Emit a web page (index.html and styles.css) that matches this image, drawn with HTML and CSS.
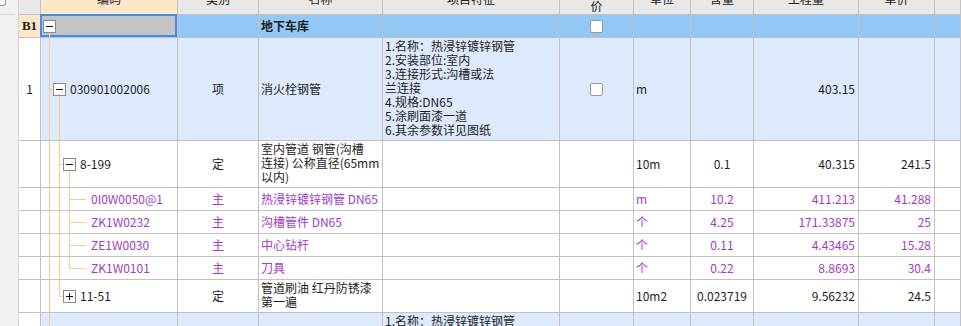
FILE: index.html
```html
<!DOCTYPE html>
<html lang="zh-CN">
<head>
  <meta charset="UTF-8">
  <title>分部分项</title>
  <link rel="stylesheet" href="styles.css">
</head>
<body>

  <div class="page">
    <div class="gutter">
      <div class="gutter-top"><span class="knob"></span></div>
    </div>

    <div class="sheet">
      <!-- header -->
      <div class="row head">
        <div class="c hd"></div>
        <div class="c hd hd-code"><span>编码</span></div>
        <div class="c hd"><span>类别</span></div>
        <div class="c hd"><span>名称</span></div>
        <div class="c hd"><span>项目特征</span></div>
        <div class="c hd"><span class="low">价</span></div>
        <div class="c hd"><span>单位</span></div>
        <div class="c hd"><span>含量</span></div>
        <div class="c hd"><span>工程量</span></div>
        <div class="c hd"><span>单价</span></div>
        <div class="c hd"></div>
      </div>

      <!-- B1 -->
      <div class="row b1">
        <div class="c num num-b1">B1</div>
        <div class="c code sel">
          <span class="bx down"><svg width="13" height="13" viewBox="0 0 13 13"><rect x="0.5" y="0.5" width="12" height="12" fill="#fff" stroke="#8a8a8a"/><path d="M3 6.5h7" stroke="#111"/></svg></span>
        </div>
        <div class="c"></div>
        <div class="c"><b>地下车库</b></div>
        <div class="c"></div>
        <div class="c ctr"><span class="chk"></span></div>
        <div class="c"></div>
        <div class="c"></div>
        <div class="c"></div>
        <div class="c"></div>
        <div class="c"></div>
      </div>

      <!-- 清单 -->
      <div class="row hl">
        <div class="c num ctr">1</div>
        <div class="c code">
          <span class="g tee"></span>
          <span class="bx down"><svg width="13" height="13" viewBox="0 0 13 13"><rect x="0.5" y="0.5" width="12" height="12" fill="#fff" stroke="#8a8a8a"/><path d="M3 6.5h7" stroke="#111"/></svg></span>
          <span class="txt">030901002006</span>
        </div>
        <div class="c ctr">项</div>
        <div class="c">消火栓钢管</div>
        <div class="c top">1.名称：热浸锌镀锌钢管<br>2.安装部位:室内<br>3.连接形式:沟槽或法<br>兰连接<br>4.规格:DN65<br>5.涂刷面漆一道<br>6.其余参数详见图纸</div>
        <div class="c ctr"><span class="chk"></span></div>
        <div class="c">m</div>
        <div class="c"></div>
        <div class="c rt">403.15</div>
        <div class="c"></div>
        <div class="c"></div>
      </div>

      <!-- 定额 8-199 -->
      <div class="row">
        <div class="c num"></div>
        <div class="c code">
          <span class="g"></span>
          <span class="g tee"></span>
          <span class="bx down"><svg width="13" height="13" viewBox="0 0 13 13"><rect x="0.5" y="0.5" width="12" height="12" fill="#fff" stroke="#8a8a8a"/><path d="M3 6.5h7" stroke="#111"/></svg></span>
          <span class="txt">8-199</span>
        </div>
        <div class="c ctr">定</div>
        <div class="c top">室内管道 钢管(沟槽<br>连接) 公称直径(65mm<br>以内)</div>
        <div class="c"></div>
        <div class="c"></div>
        <div class="c">10m</div>
        <div class="c ctr">0.1</div>
        <div class="c rt">40.315</div>
        <div class="c rt">241.5</div>
        <div class="c"></div>
      </div>

      <!-- 主材 -->
      <div class="row sub">
        <div class="c num"></div>
        <div class="c code"><span class="g"></span><span class="g"></span><span class="g tee long"></span><span class="txt">0I0W0050@1</span></div>
        <div class="c ctr">主</div>
        <div class="c">热浸锌镀锌钢管 DN65</div>
        <div class="c"></div>
        <div class="c"></div>
        <div class="c">m</div>
        <div class="c ctr">10.2</div>
        <div class="c rt">411.213</div>
        <div class="c rt">41.288</div>
        <div class="c"></div>
      </div>

      <div class="row sub">
        <div class="c num"></div>
        <div class="c code"><span class="g"></span><span class="g"></span><span class="g tee long"></span><span class="txt">ZK1W0232</span></div>
        <div class="c ctr">主</div>
        <div class="c">沟槽管件 DN65</div>
        <div class="c"></div>
        <div class="c"></div>
        <div class="c">个</div>
        <div class="c ctr">4.25</div>
        <div class="c rt">171.33875</div>
        <div class="c rt">25</div>
        <div class="c"></div>
      </div>

      <div class="row sub">
        <div class="c num"></div>
        <div class="c code"><span class="g"></span><span class="g"></span><span class="g tee long"></span><span class="txt">ZE1W0030</span></div>
        <div class="c ctr">主</div>
        <div class="c">中心钻杆</div>
        <div class="c"></div>
        <div class="c"></div>
        <div class="c">个</div>
        <div class="c ctr">0.11</div>
        <div class="c rt">4.43465</div>
        <div class="c rt">15.28</div>
        <div class="c"></div>
      </div>

      <div class="row sub">
        <div class="c num"></div>
        <div class="c code"><span class="g"></span><span class="g"></span><span class="g end long"></span><span class="txt">ZK1W0101</span></div>
        <div class="c ctr">主</div>
        <div class="c">刀具</div>
        <div class="c"></div>
        <div class="c"></div>
        <div class="c">个</div>
        <div class="c ctr">0.22</div>
        <div class="c rt">8.8693</div>
        <div class="c rt">30.4</div>
        <div class="c"></div>
      </div>

      <!-- 定额 11-51 -->
      <div class="row">
        <div class="c num"></div>
        <div class="c code">
          <span class="g"></span>
          <span class="g end"></span>
          <span class="bx"><svg width="13" height="13" viewBox="0 0 13 13"><rect x="0.5" y="0.5" width="12" height="12" fill="#fff" stroke="#8a8a8a"/><path d="M3 6.5h7M6.5 3v7" stroke="#111"/></svg></span>
          <span class="txt">11-51</span>
        </div>
        <div class="c ctr">定</div>
        <div class="c top">管道刷油 红丹防锈漆<br>第一遍</div>
        <div class="c"></div>
        <div class="c"></div>
        <div class="c">10m2</div>
        <div class="c ctr">0.023719</div>
        <div class="c rt">9.56232</div>
        <div class="c rt">24.5</div>
        <div class="c"></div>
      </div>

      <!-- next item, cut off -->
      <div class="row hl">
        <div class="c num"></div>
        <div class="c code"><span class="g"></span></div>
        <div class="c"></div>
        <div class="c"></div>
        <div class="c top">1.名称：热浸锌镀锌钢管</div>
        <div class="c"></div>
        <div class="c"></div>
        <div class="c"></div>
        <div class="c"></div>
        <div class="c"></div>
        <div class="c"></div>
      </div>
    </div>
  </div>

</body>
</html>
```

FILE: styles.css
```css
/* Base */
body {
  margin: 0;
  font-family: "Noto Sans CJK SC", "Noto Sans", sans-serif;
  font-size: 12px;
  color: #1e1e1e;
  background: #fff;
  overflow: hidden;
}

.page {
  display: flex;
  height: 326px;
  overflow: hidden;
}

/* left strip */
.gutter {
  width: 18px;
  flex: none;
  background: #f0f0f0;
  border-right: 1px solid #d4d4d4;
}

.gutter-top {
  height: 14px;
  margin-right: 3px;
  border-bottom: 1px solid #d6d6d6;
}

.knob {
  display: block;
  width: 5px;
  height: 5px;
  border-right: 1px solid #9a9a9a;
  border-bottom: 1px solid #9a9a9a;
  border-bottom-right-radius: 3px;
  background: #fafafa;
}

/* grid */
.sheet {
  flex: 1;
  display: grid;
  grid-template-columns: 22px 137px 81px 124px 177px 74px 57px 63px 105px 76px 1fr;
  grid-template-rows: 15px 23px 103px 47px 23px 23px 23px 23px 33px 60px;
  align-content: start;
}

.row {
  display: contents;
}

.c {
  --ln: #ffca88;
  box-sizing: border-box;
  display: flex;
  align-items: center;
  min-width: 0;
  padding: 0 2px;
  line-height: 14px;
  white-space: nowrap;
  overflow: hidden;
  border-right: 1px solid #c2c2c2;
  border-bottom: 1px solid #c2c2c2;
  background: #fff;
}

.ctr { justify-content: center; }
.rt { justify-content: flex-end; padding-right: 3px; }
.top { align-items: flex-start; padding-top: 1px; }

/* header */
.hd {
  background: #e8e8e8;
  justify-content: center;
  align-items: flex-start;
  padding: 0;
  color: #222;
}

.hd span {
  margin-top: -8px;
}

.hd .low {
  margin-top: -1px;
}

.hd-code {
  background: #ffe6c6;
}

/* rows */
.b1 > .c {
  background: #93c8f6;
}

.b1 > .num-b1 {
  background: #ffe7c8;
  justify-content: center;
  font-family: "Liberation Serif", "DejaVu Serif", serif;
  font-weight: bold;
  font-size: 13px;
}

.b1 > .sel {
  background: #c4c4c4;
  box-shadow: inset 1px 1px 0 #3d8ef0, inset -2px -2px 0 #3d8ef0, -1px -1px 0 #3d8ef0;
}

.hl > .c {
  background: #dde9fc;
}

.hl > .num {
  background: #fff;
}

.sub > .c {
  color: #a03cc4;
}

/* tree column */
.code {
  align-items: stretch;
  padding: 0 0 0 2px;
}

.g {
  width: 10px;
  flex: none;
  background: linear-gradient(var(--ln), var(--ln)) 6px 0 / 1px 100% no-repeat;
}

.g.tee {
  background:
    linear-gradient(var(--ln), var(--ln)) 6px 0 / 1px 100% no-repeat,
    linear-gradient(var(--ln), var(--ln)) 6px 50% / 4px 1px no-repeat;
}

.g.end {
  background:
    linear-gradient(var(--ln), var(--ln)) 6px 0 / 1px 50% no-repeat,
    linear-gradient(var(--ln), var(--ln)) 6px 50% / 4px 1px no-repeat;
}

.g.tee.long {
  width: 23px;
  background:
    linear-gradient(var(--ln), var(--ln)) 6px 0 / 1px 100% no-repeat,
    linear-gradient(var(--ln), var(--ln)) 6px 50% / 17px 1px no-repeat;
}

.g.end.long {
  width: 23px;
  background:
    linear-gradient(var(--ln), var(--ln)) 6px 0 / 1px 50% no-repeat,
    linear-gradient(var(--ln), var(--ln)) 6px 50% / 17px 1px no-repeat;
}

.bx {
  width: 13px;
  flex: none;
  display: flex;
  align-items: center;
}

.bx svg {
  display: block;
}

.bx.down {
  background: linear-gradient(var(--ln), var(--ln)) 6px 100% / 1px 50% no-repeat;
}

.txt {
  display: flex;
  align-items: center;
  margin-left: 4px;
}

.g.long + .txt {
  margin-left: 5px;
}

/* checkbox */
.chk {
  box-sizing: border-box;
  width: 13px;
  height: 13px;
  border: 1px solid #9a9a9a;
  border-radius: 2px;
  background: #fff;
}
```
